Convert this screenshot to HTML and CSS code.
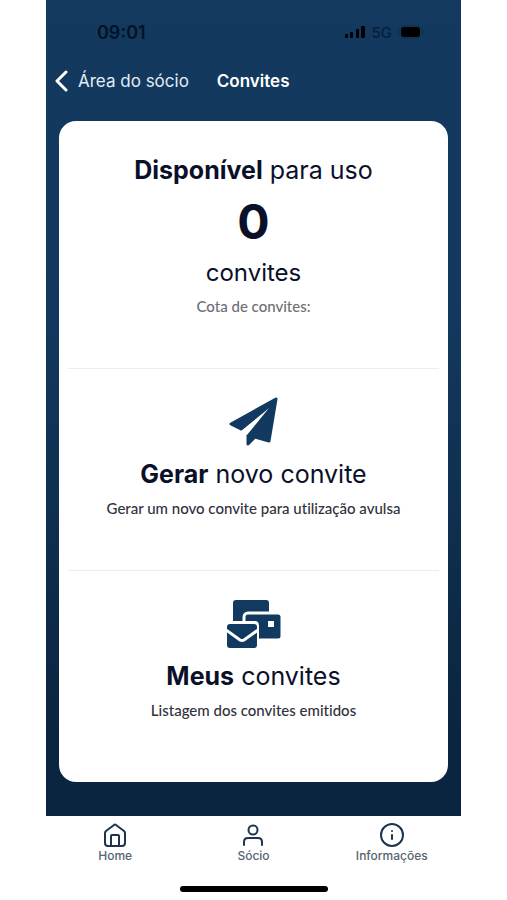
FILE: index.html
```html
<!DOCTYPE html>
<html lang="pt-BR">
<head>
<meta charset="utf-8">
<meta name="viewport" content="width=device-width, initial-scale=1">
<title>Convites</title>
<link rel="stylesheet" href="styles.css">
</head>
<body>
<div class="phone">
  <div class="screen">
    <div class="status">
      <span class="time">09:01</span>
      <span class="signals">
        <svg width="22" height="14" viewBox="0 0 22 14" aria-hidden="true">
          <rect x="1" y="9" width="3" height="4" rx="1"/><rect x="6" y="7" width="3" height="6" rx="1"/><rect x="12" y="4" width="3" height="9" rx="1"/><rect x="17" y="1" width="4" height="12" rx="1"/>
        </svg>
        <span class="network">5G</span>
        <svg width="28" height="14" viewBox="0 0 28 14" aria-hidden="true">
          <rect x="1" y="1" width="23" height="12" rx="4" fill="none" stroke="#0e304f"/><rect x="3" y="2" width="19" height="10" rx="3"/><path d="M25 5q2 2 0 4z" fill="#0b2a47"/>
        </svg>
      </span>
    </div>
    <header class="topbar">
      <a class="back" href="#area">
        <svg width="14" height="22" viewBox="0 0 14 22" aria-hidden="true"><path d="M11 2 2 11l9 9" fill="none" stroke="#fff" stroke-width="3" stroke-linecap="round" stroke-linejoin="round"/></svg>
        <span>Área do sócio</span>
      </a>
      <h1 class="title">Convites</h1>
    </header>
    <main class="card">
      <section class="panel quota">
        <h2 class="heading"><strong>Disponível</strong> para uso</h2>
        <p class="count">0</p>
        <p class="unit">convites</p>
        <p class="note muted">Cota de convites:</p>
      </section>
      <a class="panel action" href="#gerar">
        <svg class="glyph" width="56" height="50" viewBox="-3 0 56 50" aria-hidden="true">
          <path d="M47 2 2 27l10 5L42 8 19 38v9l7-7 14 4z" fill="#12395f" stroke="#12395f" stroke-width="3" stroke-linejoin="round"/>
          <path d="M13 34 40 11 18 38z" fill="#fff"/>
        </svg>
        <h2 class="heading"><strong>Gerar</strong> novo convite</h2>
        <p class="note">Gerar um novo convite para utilização avulsa</p>
      </a>
      <a class="panel action" href="#meus">
        <svg class="glyph" width="56" height="50" viewBox="0 0 56 50" aria-hidden="true">
          <rect x="7" y="1" width="36" height="26" rx="3" fill="#12395f"/>
          <rect x="18" y="14" width="38" height="27" rx="4" fill="#12395f" stroke="#fff" stroke-width="3"/>
          <rect x="42" y="22" width="6" height="6" fill="#fff"/>
          <path d="M0 22h29q4 0 4 5v23H0z" fill="#fff"/>
          <rect x="1" y="25" width="30" height="24" rx="3" fill="#12395f"/>
          <path d="m0 31 14 10q2 1 4 0l14-10" fill="none" stroke="#fff" stroke-width="3"/>
        </svg>
        <h2 class="heading"><strong>Meus</strong> convites</h2>
        <p class="note">Listagem dos convites emitidos</p>
      </a>
    </main>
  </div>
  <nav class="tabs">
    <a class="tab" href="#home">
      <svg width="24" height="24" viewBox="0 0 24 24" aria-hidden="true"><path d="M2 10q0-1 1-2l8-6q1-1 2 0l8 6q1 1 1 2v10q0 3-3 3H5q-3 0-3-3zM8 23V13q0-1 1-1h6q1 0 1 1v10"/></svg>
      <span>Home</span>
    </a>
    <a class="tab" href="#socio">
      <svg width="24" height="24" viewBox="0 0 24 24" aria-hidden="true"><circle cx="12" cy="7" r="4.500"/><path d="M3 22v-3q0-4 4-4h10q4 0 4 4v3"/></svg>
      <span>Sócio</span>
    </a>
    <a class="tab" href="#info">
      <svg width="24" height="24" viewBox="0 0 24 24" aria-hidden="true"><circle cx="12" cy="12" r="11"/><path d="M12 12v4M12 8h.01"/></svg>
      <span>Informações</span>
    </a>
  </nav>
  <div class="home-bar"></div>
</div>
</body>
</html>
```
FILE: styles.css
```css
* { box-sizing: border-box; }

body {
  margin: 0;
  background: #fff;
  font-family: Inter, "Liberation Sans", sans-serif;
  color: #0b1029;
}

h1, h2, p { margin: 0; }
a { color: inherit; text-decoration: none; }

.phone {
  display: flex;
  flex-direction: column;
  min-height: 100vh;
  margin: 0 46px;
}

.screen {
  display: flex;
  flex-direction: column;
  flex: 1;
  padding: 0 13px 34px;
  background: linear-gradient(#13395e 0%, #12385d 40%, #0a253f 90%);
}

.status {
  display: flex;
  align-items: center;
  justify-content: space-between;
  height: 64px;
  padding: 0 22px 0 38px;
  color: #031326;
}

.time { font-size: 18px; font-weight: 600; }
.signals { display: flex; align-items: center; gap: 6px; }
.network { font-size: 15px; font-weight: 500; color: #06203b; }

.topbar {
  display: flex;
  align-items: center;
  gap: 28px;
  height: 34px;
  margin: 0 -4px 23px;
  color: #fff;
  font-size: 17px;
}

.back { display: flex; align-items: center; gap: 9px; color: #e3edf6; }
.title { font-size: 17px; font-weight: 600; }

.card {
  display: flex;
  flex-direction: column;
  flex: 1;
  padding: 0 9px;
  border-radius: 17px;
  background: #fff;
}

.panel {
  display: flex;
  flex-direction: column;
  align-items: center;
  text-align: center;
}

.quota { padding: 32px 0 52px; }
.action { padding: 28px 0 52px; border-top: 1px solid #ececef; }

.heading { font-size: 25px; font-weight: 400; line-height: 34px; }
.heading strong { font-weight: 700; }
.count { font-size: 48px; font-weight: 700; line-height: 70px; }
.unit { font-size: 24px; line-height: 32px; }
.note {
  margin-top: 7px;
  font-family: Lato, "Noto Sans", sans-serif;
  font-size: 15px;
  font-weight: 500;
  font-variant-ligatures: none;
  line-height: 20px;
  color: #30323c;
}
.muted { color: #6d7074; }
.glyph { margin-bottom: 10px; }

.tabs {
  display: grid;
  grid-template-columns: repeat(3, 1fr);
  padding-top: 7px;
}

.tab {
  display: flex;
  flex-direction: column;
  align-items: center;
  font-size: 12px;
  font-weight: 500;
  line-height: 17px;
  color: #566370;
}

.tab svg { fill: none; stroke: #1d344e; stroke-width: 2; stroke-linecap: round; stroke-linejoin: round; }

.home-bar {
  width: 148px;
  height: 6px;
  margin: 22px auto 8px;
  border-radius: 3px;
  background: #000;
}
```
